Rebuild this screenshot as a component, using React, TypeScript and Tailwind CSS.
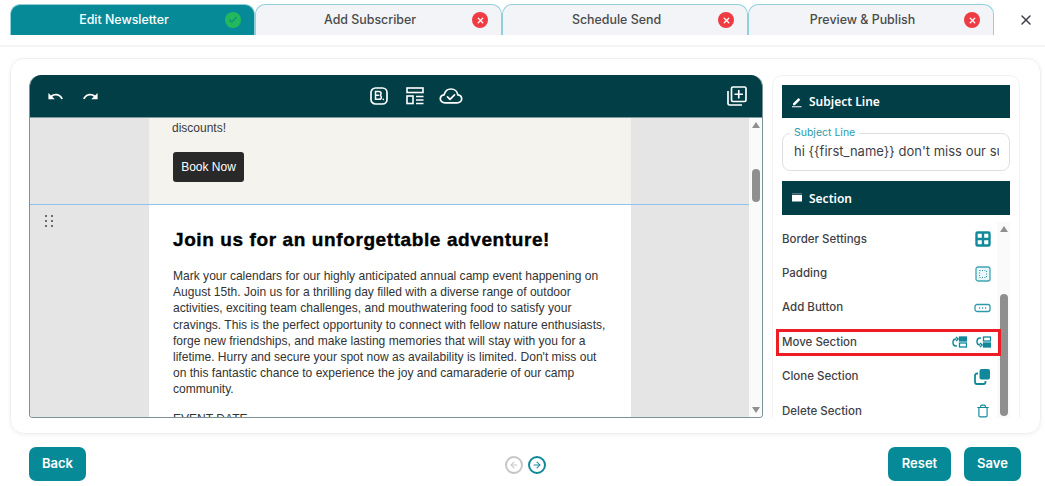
import React from 'react';
import { X, Check, ArrowLeft, ArrowRight, Trash } from 'lucide-react';
import { MdUndo, MdRedo } from 'react-icons/md';

const tabs = [
    { label: 'Edit Newsletter', done: true, width: 'w-[245px]' },
    { label: 'Add Subscriber', done: false, width: 'w-[247px]' },
    { label: 'Schedule Send', done: false, width: 'w-[246px]' },
    { label: 'Preview & Publish', done: false, width: 'w-[246px]' },
];

const TabBar = () => (
    <header className="h-[47px] shrink-0 border-b-2 border-[#f3f4f6] pl-[10px] pt-[4px] flex items-start">
        {tabs.map((t) => (
            <div
                key={t.label}
                className={`${t.width} h-[31px] relative flex items-center justify-center rounded-t-[10px] border-x border-t border-[#8fd0da] text-[12.4px] font-medium pr-[17px] ${t.done ? 'bg-[#078a98] text-white' : 'bg-[#f2f4f7] text-[#4a4a4a]'}`}
            >
                {t.label}
                <span className={`absolute right-[13px] top-[7px] w-[16px] h-[16px] rounded-full flex items-center justify-center ${t.done ? 'bg-[#22b85c]' : 'bg-[#ef3b42]'}`}>
                    {t.done ? <Check size={10} strokeWidth={3} className="text-[#128a8a]" /> : <X size={9} strokeWidth={3.5} className="text-white" />}
                </span>
            </div>
        ))}
        <X size={16} strokeWidth={2.2} className="ml-[24px] mt-[8px] text-[#3f3f46]" />
    </header>
);

const BootstrapIcon = () => (
    <svg width="18" height="18" viewBox="0 0 18 18" fill="none" stroke="#fff" strokeWidth="1.7">
        <rect x="1" y="1" width="16" height="16" rx="4.5" />
        <path d="M5.500 4.500h3.400c1.400 0 2.200.7 2.200 1.900 0 1-.5 1.600-1.300 1.800 1 .2 1.600 1 1.600 2 0 1.400-.9 2.100-2.400 2.100H5.500zM5.500 8.300h3.400" strokeWidth="1.500" />
        <circle cx="13.300" cy="12.400" r=".8" fill="#fff" stroke="none" />
    </svg>
);

const TemplateIcon = () => (
    <svg width="18" height="18" viewBox="0 0 18 18" fill="none" stroke="#fff" strokeWidth="1.6">
        <rect x="1" y="1" width="16" height="4.5" />
        <rect x="1" y="9" width="6" height="7.5" />
        <path d="M10 9.500h7.500M10 13h7.500M10 16.500h7.500" />
    </svg>
);

const CloudCheckIcon = () => (
    <svg width="24" height="18" viewBox="0 0 24 18" fill="none" stroke="#fff" strokeWidth="1.7" strokeLinejoin="round" strokeLinecap="round">
        <path d="M6 15.800c-2.600 0-4.700-1.700-4.700-4 0-2.100 1.600-3.700 3.800-4C6 4.300 8.700 2 12 2c3.500 0 6.300 2.500 6.800 5.800 2.200.3 3.900 1.800 3.900 4 0 2.300-2 4-4.600 4z" />
        <path d="M8.500 9.800l2.500 2.500 4.500-4.500" />
    </svg>
);

const AddBoxesIcon = () => (
    <svg width="20" height="20" viewBox="0 0 20 20" fill="none" stroke="#fff" strokeWidth="1.7">
        <rect x="4.500" y="1" width="14.500" height="14.500" rx="1.500" />
        <path d="M11.750 4v8.500M7.500 8.250H16" />
        <path d="M1 5v12.500A1.500 1.500 0 0 0 2.500 19H15" />
    </svg>
);

const ScrollTrack = ({ thumbTop, thumbHeight, bottomArrow }: { thumbTop: string; thumbHeight: string; bottomArrow?: boolean }) => (
    <div className="w-[13px] shrink-0 bg-[#fafafa] flex flex-col items-center">
        <span className="mt-[4px] w-0 h-0 border-x-[4px] border-x-transparent border-b-[6px] border-b-[#8f8f8f]" />
        <span className={`w-[8px] shrink-0 rounded-full bg-[#8f8f8f] ${thumbTop} ${thumbHeight}`} />
        {bottomArrow && <span className="mt-auto mb-[4px] w-0 h-0 border-x-[4px] border-x-transparent border-t-[6px] border-t-[#8f8f8f]" />}
    </div>
);

const EditorCanvas = () => (
    <section className="w-[734px] h-[343px] shrink-0 flex flex-col rounded-t-[12px] border-x border-b border-[#7d9296] rounded-b-[4px] overflow-hidden font-['Liberation_Sans',Arial,sans-serif]">
        <div className="h-[43px] shrink-0 bg-[#023e46] flex items-center pl-[17px] pr-[15px] border-b border-[#7d9a9e]">
            <MdUndo size={17} className="text-white" />
            <MdRedo size={17} className="text-white ml-[18px]" />
            <div className="ml-[271px] flex items-center">
                <BootstrapIcon />
                <span className="ml-[18px]"><TemplateIcon /></span>
                <span className="ml-[15px]"><CloudCheckIcon /></span>
            </div>
            <div className="ml-auto"><AddBoxesIcon /></div>
        </div>
        <div className="flex-1 min-h-0 flex">
            <div className="flex-1 min-w-0 overflow-hidden flex flex-col">
                <div className="h-[87px] shrink-0 flex border-b border-[#8ec2f0]">
                    <div className="w-[119px] bg-[#e5e5e5]" />
                    <div className="w-[482px] bg-[#f5f3ee] pl-[23px] pt-[2px]">
                        <p className="text-[12px] leading-[16px] text-[#3a3a3a]">discounts!</p>
                        <button className="mt-[16px] h-[30px] w-[71px] ml-[1px] bg-[#292929] rounded-[3px] text-white text-[12px]">Book Now</button>
                    </div>
                    <div className="flex-1 bg-[#e5e5e5]" />
                </div>
                <div className="flex-1 min-h-0 flex">
                    <div className="w-[119px] bg-[#e5e5e5] pl-[15px] pt-[10px]">
                        <div className="grid grid-cols-2 gap-x-[4px] gap-y-[3px] w-[8px]">
                            {[0, 1, 2, 3, 4, 5].map((i) => <span key={i} className="w-[2px] h-[2px] rounded-full bg-[#444]" />)}
                        </div>
                    </div>
                    <div className="w-[482px] bg-white pl-[24px] pr-[24px] pt-[23px] overflow-hidden">
                        <h2 className="text-[19px] leading-[24px] font-bold text-black tracking-[0.6px] [-webkit-text-stroke:0.4px_black] whitespace-nowrap">Join us for an unforgettable adventure!</h2>
                        <p className="mt-[16px] text-[12.05px] leading-[16.2px] text-[#333]">
                            Mark your calendars for our highly anticipated annual camp event happening on August 15th. Join us for a thrilling day filled with a diverse range of outdoor activities, exciting team challenges, and mouthwatering food to satisfy your cravings. This is the perfect opportunity to connect with fellow nature enthusiasts, forge new friendships, and make lasting memories that will stay with you for a lifetime. Hurry and secure your spot now as availability is limited. Don't miss out on this fantastic chance to experience the joy and camaraderie of our camp community.
                        </p>
                        <p className="mt-[13px] text-[12.05px] leading-[16px] text-[#333]">EVENT DATE</p>
                    </div>
                    <div className="flex-1 bg-[#e5e5e5]" />
                </div>
            </div>
            <ScrollTrack thumbTop="mt-[41px]" thumbHeight="h-[33px]" bottomArrow />
        </div>
    </section>
);

const BarHeading = ({ icon, label, height }: { icon: React.ReactNode; label: string; height: string }) => (
    <div className={`${height} shrink-0 bg-[#023e46] flex items-center pl-[9px] gap-[6px] text-white text-[12px] font-semibold font-['Noto_Sans',sans-serif]`}>
        {icon}
        <span className="pt-[1px]">{label}</span>
    </div>
);

const PenIcon = () => (
    <svg width="12" height="12" viewBox="0 0 12 12" fill="#fff">
        <path d="M2 7.500 7.500 2l1.800 1.800-5.500 5.500H2zM1 10.300h9.500v1H1z" />
    </svg>
);

const SectionIcon = () => (
    <svg width="12" height="12" viewBox="0 0 12 12" fill="#fff">
        <rect x="1" y="3" width="10" height="6.500" />
        <path d="M1 1.500h10v.7H1z" opacity=".6" />
    </svg>
);

const teal = '#12899a';

const BorderIcon = () => (
    <svg width="16" height="16" viewBox="0 0 16 16" fill="none" stroke={teal} strokeWidth="2.4"><rect x="1.500" y="1.500" width="13" height="13" rx="1" /><path d="M8 1.500v13M1.500 8h13" /></svg>
);
const PaddingIcon = () => (
    <svg width="16" height="16" viewBox="0 0 16 16" fill="#eaf6f8" stroke="#3fa5b4" strokeWidth="1.300"><rect x="1" y="1" width="14" height="14" rx="2" /><rect x="4.500" y="4.500" width="7" height="7" fill="none" stroke={teal} strokeDasharray="1 1.500" strokeWidth=".9" /></svg>
);
const ButtonIcon = () => (
    <svg width="17" height="10" viewBox="0 0 17 10" fill="none" stroke="#2f9aaa" strokeWidth="1.300"><rect x="1" y="1.500" width="15" height="7" rx="2" /><path d="M5 5h1.200M8 5h1.200M11 5h1.200" strokeWidth="1.500" /></svg>
);
const MoveIcon = ({ flip }: { flip?: boolean }) => (
    <svg width="15" height="12" viewBox="0 0 15 12" fill="none">
        {flip ? (
            <path d="M5 2H4C2.200 2 1 3.300 1 5.500S2.200 9 4 9M4 7l2 2-2 2" stroke={teal} strokeWidth="1.500" />
        ) : (
            <path d="M5 10H4C2.200 10 1 8.700 1 6.500S2.200 3 4 3M4 1l2 2-2 2" stroke={teal} strokeWidth="1.500" />
        )}
        <rect x="7.500" y="1" width="7" height="4" fill={flip ? 'none' : teal} stroke={teal} strokeWidth="1.300" />
        <rect x="7.500" y="7" width="7" height="4" fill={flip ? teal : 'none'} stroke={teal} strokeWidth="1.300" />
    </svg>
);
const CloneIcon = () => (
    <svg width="17" height="17" viewBox="0 0 17 17"><rect x="5.500" y="1" width="10.500" height="10.500" rx="2" fill={teal} /><path d="M4 5.500H3A2 2 0 0 0 1 7.500V14a2 2 0 0 0 2 2h6.500a2 2 0 0 0 2-2v-1" fill="none" stroke={teal} strokeWidth="1.800" /></svg>
);

const Row = ({ label, children }: { label: string; children: React.ReactNode }) => (
    <div className="h-[34.4px] flex items-center justify-between pr-[6px] text-[11.5px] font-medium text-[#3f3f46]">
        <span>{label}</span>
        {children}
    </div>
);

const SidePanel = () => (
    <aside className="ml-[9px] w-[248px] h-[343px] shrink-0 rounded-t-[10px] border border-b-0 border-[#f1f2f4] pl-[9px] pr-[9px] pt-[9px] flex flex-col overflow-hidden">
        <BarHeading icon={<PenIcon />} label="Subject Line" height="h-[33px]" />
        <div className="relative mt-[15px] h-[38px] shrink-0 rounded-[8px] border border-[#dcdfe3] flex items-center pl-[11px] pr-[10px]">
            <span className="absolute -top-[7px] left-[7px] bg-white px-[4px] text-[10.5px] leading-[12px] text-[#2a9bab]">Subject Line</span>
            <span className="text-[13px] text-[#3f3f46] whitespace-nowrap overflow-hidden">hi {'{{first_name}}'} don't miss our su</span>
        </div>
        <div className="mt-[10px]">
            <BarHeading icon={<SectionIcon />} label="Section" height="h-[34px]" />
        </div>
        <div className="mt-[7px] flex-1 min-h-0 flex">
            <div className="flex-1 min-w-0 relative">
                <Row label="Border Settings"><BorderIcon /></Row>
                <Row label="Padding"><PaddingIcon /></Row>
                <Row label="Add Button"><ButtonIcon /></Row>
                <Row label="Move Section"><span className="flex gap-[9px]"><MoveIcon /><MoveIcon flip /></span></Row>
                <Row label="Clone Section"><CloneIcon /></Row>
                <Row label="Delete Section"><Trash size={14} strokeWidth={2} color={teal} className="mr-[1px]" /></Row>
                {/* highlight over the move row */}
                <span className="absolute -left-[6px] top-[107px] -right-[4px] h-[27px] border-[3px] border-[#ee1c25] pointer-events-none z-10" />
            </div>
            <ScrollTrack thumbTop="mt-[62px]" thumbHeight="h-[122px]" />
        </div>
    </aside>
);

const App = () => (
    <div className="w-[1045px] h-[486px] bg-white flex flex-col overflow-hidden font-['Inter',sans-serif]">
        <TabBar />
        <main className="ml-[10px] w-[1031px] mt-[11px] h-[376px] shrink-0 rounded-[14px] border border-[#eef0f2] shadow-[0_1px_4px_rgba(0,0,0,0.06)] pl-[18px] pt-[16px] flex items-start">
            <EditorCanvas />
            <SidePanel />
        </main>
        <footer className="flex-1 flex items-start justify-between pl-[29px] pr-[24px] pt-[13px]">
            <button className="w-[57px] h-[34px] rounded-[7px] bg-[#078a98] text-white text-[13px] font-semibold">Back</button>
            <div className="flex items-center gap-[5px] mt-[9px] ml-[76px]">
                <span className="w-[18px] h-[18px] rounded-full border-2 border-[#c4c6c8] flex items-center justify-center"><ArrowLeft size={10} strokeWidth={2.5} className="text-[#c4c6c8]" /></span>
                <span className="w-[18px] h-[18px] rounded-full border-2 border-[#12899a] flex items-center justify-center"><ArrowRight size={10} strokeWidth={2.5} className="text-[#12899a]" /></span>
            </div>
            <div className="flex gap-[13px]">
                <button className="w-[63px] h-[34px] rounded-[7px] bg-[#078a98] text-white text-[13px] font-semibold">Reset</button>
                <button className="w-[57px] h-[34px] rounded-[7px] bg-[#078a98] text-white text-[13px] font-semibold">Save</button>
            </div>
        </footer>
    </div>
);

export default App;
